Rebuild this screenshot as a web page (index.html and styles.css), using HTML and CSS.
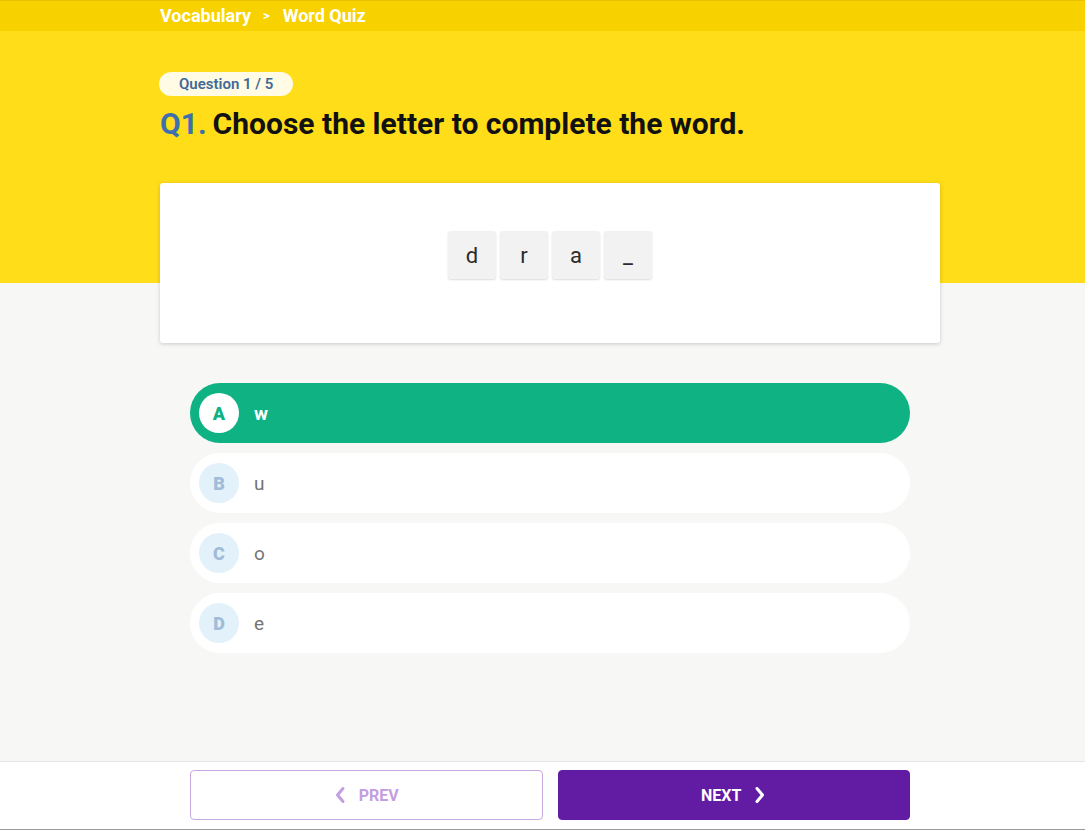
FILE: index.html
```html
<!DOCTYPE html>
<html lang="en">
<head>
<meta charset="utf-8">
<title>Word Quiz</title>
<link rel="stylesheet" href="styles.css">
</head>
<body>
<div class="page">
  <header class="topbar">
    <nav class="wrap crumbs">
      <span class="crumb">Vocabulary</span>
      <span class="sep">&gt;</span>
      <span class="crumb">Word Quiz</span>
    </nav>
  </header>
  <main class="main">
    <div class="wrap">
      <div class="pill">Question 1 / 5</div>
      <h1 class="title"><span class="qnum">Q1.</span>Choose the letter to complete the word.</h1>
      <section class="card">
        <div class="tiles">
          <div class="tile">d</div>
          <div class="tile">r</div>
          <div class="tile">a</div>
          <div class="tile">_</div>
        </div>
      </section>
      <ul class="options">
        <li class="option selected"><span class="badge">A</span><span class="otext">w</span></li>
        <li class="option"><span class="badge">B</span><span class="otext">u</span></li>
        <li class="option"><span class="badge">C</span><span class="otext">o</span></li>
        <li class="option"><span class="badge">D</span><span class="otext">e</span></li>
      </ul>
    </div>
  </main>
  <footer class="footer">
    <div class="wrap btns">
      <button class="btn prev" type="button">
        <svg class="chev" width="12" height="18" viewBox="0 0 12 18"><polyline points="9,2.5 3.5,9 9,15.5" fill="none" stroke="currentColor" stroke-width="3" stroke-linecap="round" stroke-linejoin="round"/></svg>
        PREV
      </button>
      <button class="btn next" type="button">
        NEXT
        <svg class="chev" width="12" height="18" viewBox="0 0 12 18"><polyline points="3,2.5 8.5,9 3,15.5" fill="none" stroke="currentColor" stroke-width="3" stroke-linecap="round" stroke-linejoin="round"/></svg>
      </button>
    </div>
  </footer>
</div>
</body>
</html>
```
FILE: styles.css
```css
* { box-sizing: border-box; }
html, body { margin: 0; padding: 0; }
body {
  font-family: Roboto, "Liberation Sans", Arial, sans-serif;
  background: #f7f7f5;
  color: #222;
}
.page {
  height: 830px;
  display: flex;
  flex-direction: column;
}
.wrap {
  width: 780px;
  margin-left: 160px;
}
.topbar {
  height: 31px;
  background: #f8d200;
  border-top: 1px solid #e9c300;
}
.crumbs {
  display: flex;
  align-items: center;
  height: 29px;
  color: #fff;
  font-weight: 700;
  font-size: 18px;
}
.sep {
  font-size: 13px;
  margin: 0 13px 0 12px;
}
.main {
  flex: 1;
  background: linear-gradient(to bottom, #ffdd19 0, #ffdd19 252px, #f7f7f5 252px);
  padding-top: 41px;
}
.pill {
  display: inline-flex;
  align-items: center;
  height: 24px;
  padding: 0 20px;
  margin-left: -1px;
  border-radius: 12px;
  background: #fffbe4;
  color: #3f6a98;
  font-size: 15px;
  font-weight: 600;
}
.title {
  margin: 10px 0 41px;
  font-size: 30px;
  line-height: 36px;
  font-weight: 700;
  color: #111;
}
.qnum {
  color: #3e70ad;
  margin-right: 6px;
}
.card {
  background: #fff;
  border-radius: 3px;
  box-shadow: 0 1px 4px rgba(0,0,0,0.18);
  height: 160px;
  padding-top: 48px;
  margin-bottom: 40px;
}
.tiles {
  display: flex;
  justify-content: center;
  gap: 4px;
}
.tile {
  width: 48px;
  height: 48px;
  border-radius: 3px;
  background: #f2f2f2;
  box-shadow: 0 1px 2px rgba(0,0,0,0.14);
  display: flex;
  align-items: center;
  justify-content: center;
  font-size: 22px;
  color: #2b2b2b;
}
.options {
  list-style: none;
  margin: 0 30px;
  padding: 0;
  display: flex;
  flex-direction: column;
  gap: 10px;
}
.option {
  height: 60px;
  border-radius: 30px;
  background: #fff;
  display: flex;
  align-items: center;
  padding-left: 9px;
  gap: 15px;
}
.badge {
  width: 40px;
  height: 40px;
  border-radius: 50%;
  background: #e3f1fb;
  color: #9fbcd9;
  display: flex;
  align-items: center;
  justify-content: center;
  font-weight: 900;
  font-size: 18px;
}
.otext {
  font-size: 19px;
  color: #747474;
}
.option.selected { background: #0fb283; }
.option.selected .badge { background: #fff; color: #0fb283; }
.option.selected .otext { color: #fff; font-weight: 700; }
.footer {
  background: #fff;
  border-top: 1px solid #e4e4e4;
  border-bottom: 1px solid #9a9a9a;
  padding: 8px 0 9px;
}
.btns {
  display: flex;
  gap: 15px;
  padding: 0 30px;
}
.btn {
  flex: 1;
  height: 50px;
  border-radius: 4px;
  display: flex;
  align-items: center;
  justify-content: center;
  gap: 13px;
  font-family: Roboto, "Liberation Sans", Arial, sans-serif;
  font-size: 16px;
  font-weight: 700;
  cursor: pointer;
}
.prev {
  background: #fff;
  border: 1px solid #c9a9e2;
  color: #c39ee1;
}
.next {
  background: #621ca3;
  border: 1px solid #621ca3;
  color: #fff;
}
.chev { display: block; }
```
